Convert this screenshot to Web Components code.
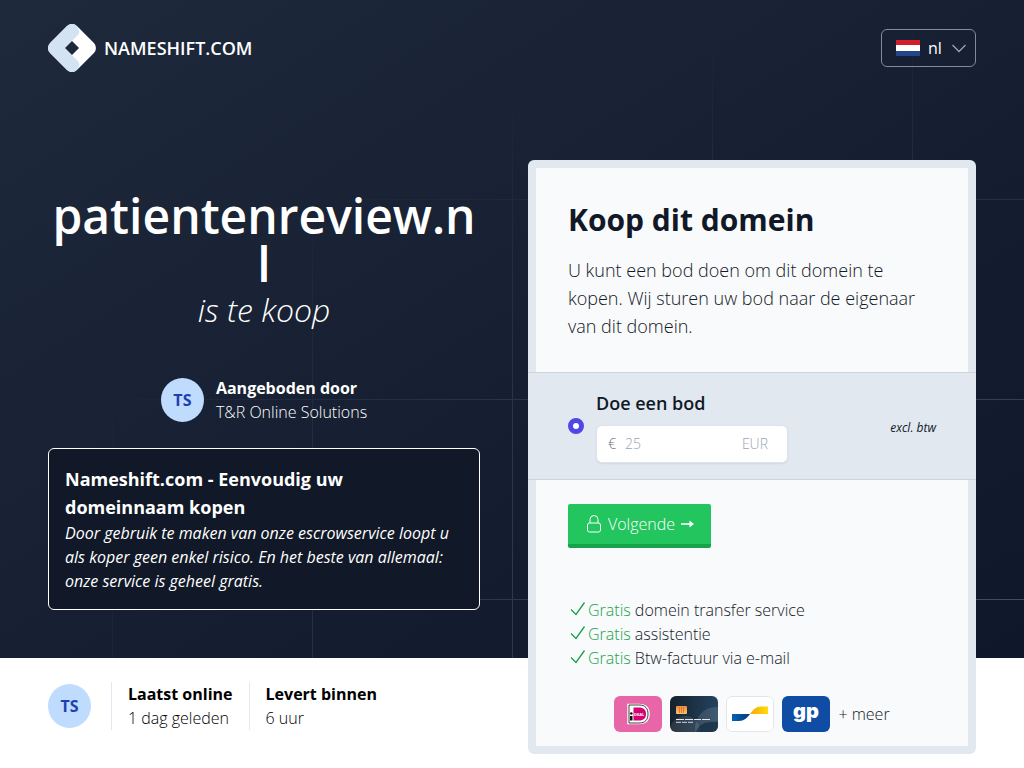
<!DOCTYPE html>
<html lang="nl">
<head>
<meta charset="utf-8">
<meta name="viewport" content="width=device-width, initial-scale=1">
<title>patientenreview.nl is te koop</title>
<style>
    body {
        margin: 0;
        background: #ffffff;
        color: #000000;
        font: 300 16px/24px "Open Sans", "Noto Sans", sans-serif;
    }
</style>
</head>
<body>
<sale-page>
    <grid-backdrop slot="backdrop"></grid-backdrop>
    <site-header slot="header">
        NAMESHIFT.COM
        <language-picker slot="actions"></language-picker>
    </site-header>
    <domain-offer slot="offer" domain="patientenreview.nl">
        is te koop
        <seller-line slot="seller" initials="TS" name="T&amp;R Online Solutions">Aangeboden door</seller-line>
        <notice-box slot="notice" heading="Nameshift.com - Eenvoudig uw domeinnaam kopen">
            Door gebruik te maken van onze escrowservice loopt u als koper geen enkel risico. En het beste van allemaal: onze service is geheel gratis.
        </notice-box>
    </domain-offer>
    <buy-card slot="card" heading="Koop dit domein">
        U kunt een bod doen om dit domein te kopen. Wij sturen uw bod naar de eigenaar van dit domein.
        <bid-option slot="option"></bid-option>
        <benefit-item slot="benefits" lead="Gratis">domein transfer service</benefit-item>
        <benefit-item slot="benefits" lead="Gratis">assistentie</benefit-item>
        <benefit-item slot="benefits" lead="Gratis">Btw-factuur via e-mail</benefit-item>
        <payment-methods slot="payments"></payment-methods>
    </buy-card>
    <seller-stats slot="stats">
        <initials-avatar slot="avatar">TS</initials-avatar>
        <stat-item label="Laatst online">1 dag geleden</stat-item>
        <stat-item label="Levert binnen">6 uur</stat-item>
    </seller-stats>
</sale-page>

<script>
class SalePage extends HTMLElement {
    constructor() {
        super();
        this.attachShadow({ mode: 'open' });
        this.shadowRoot.innerHTML = `
            <style>
                :host {
                    display: grid;
                    grid-template-columns: 48px 1fr 1fr 48px;
                    grid-template-rows: auto auto 1fr;
                    isolation: isolate;
                }
                slot[name="backdrop"]::slotted(*) { grid-column: 1 / -1; grid-row: 1 / 3; z-index: -1; }
                slot[name="header"]::slotted(*) { grid-column: 2 / 4; grid-row: 1; }
                slot[name="offer"]::slotted(*) { grid-column: 2; grid-row: 2; margin: 96px 32px 48px 0; }
                slot[name="card"]::slotted(*) { grid-column: 3; grid-row: 2 / 4; margin: 64px 0 14px 16px; }
                slot[name="stats"]::slotted(*) { grid-column: 2; grid-row: 3; margin: 24px 0; }
            </style>
            <slot name="backdrop"></slot>
            <slot name="header"></slot>
            <slot name="offer"></slot>
            <slot name="card"></slot>
            <slot name="stats"></slot>
        `;
    }
}
customElements.define('sale-page', SalePage);

class GridBackdrop extends HTMLElement {
    constructor() {
        super();
        this.attachShadow({ mode: 'open' });
        this.shadowRoot.innerHTML = `
            <style>
                :host {
                    display: grid;
                    contain: size;
                    background: linear-gradient(to bottom right, #1e293b, #0f172a);
                }
                svg {
                    width: 100%; height: 100%;
                    stroke: rgba(255, 255, 255, 0.25);
                    -webkit-mask-image: radial-gradient(100% 100% at bottom right, #fff, transparent);
                    mask-image: radial-gradient(100% 100% at bottom right, #fff, transparent);
                }
            </style>
            <svg aria-hidden="true">
                <defs>
                    <pattern id="lines" x="50%" y="-1" width="200" height="200" patternUnits="userSpaceOnUse">
                        <path d="M.5 200V.5H200" fill="none"/>
                    </pattern>
                </defs>
                <rect width="100%" height="100%" stroke="none" stroke-width="0" fill="url(#lines)"/>
            </svg>
        `;
    }
}
customElements.define('grid-backdrop', GridBackdrop);

class SiteHeader extends HTMLElement {
    constructor() {
        super();
        this.attachShadow({ mode: 'open' });
        this.shadowRoot.innerHTML = `
            <style>
                :host { display: block; color: #fff; }
                header { display: flex; align-items: center; justify-content: space-between; height: 96px; }
                a {
                    display: flex; align-items: center; gap: 8px;
                    color: inherit; text-decoration: none;
                    font-size: 18px; line-height: 28px; font-weight: 600;
                }
                svg { width: 48px; height: 48px; }
            </style>
            <header>
                <a href="#">
                    <svg viewBox="0 0 48 48" aria-hidden="true">
                        <clipPath id="tile"><rect x="5" y="5" width="38" height="38" rx="7" transform="rotate(45 24 24)"/></clipPath>
                        <g clip-path="url(#tile)">
                            <path fill="#fff" d="M0 0h48v48H0z"/>
                            <path fill="#d3e3f4" d="M0 0H28L29 3C32 7 32 9 29 12L17 24L29 36C32 39 32 42 29 45L28 48H0z"/>
                        </g>
                        <path fill="#1c283b" d="M24 17l7 7-7 7-7-7z"/>
                    </svg>
                    <slot></slot>
                </a>
                <slot name="actions"></slot>
            </header>
        `;
    }
}
customElements.define('site-header', SiteHeader);

class LanguagePicker extends HTMLElement {
    constructor() {
        super();
        this.attachShadow({ mode: 'open' });
        this.shadowRoot.innerHTML = `
            <style>
                :host { display: block; color: #fff; }
                label {
                    display: flex; align-items: center;
                    height: 36px; padding: 0 8px 0 14px;
                    border: 1px solid #858c98; border-radius: 6px;
                }
                .flag { width: 24px; height: 16px; margin-right: 8px; }
                .chevron { width: 16px; height: 16px; margin-left: 9px; fill: none; stroke: #9ca3af; stroke-width: 1.3; }
                select {
                    appearance: none; border: 0; padding: 0; margin: 0;
                    background: none; color: inherit;
                    font: 400 16px/24px "Open Sans", sans-serif;
                }
                option { color: #111827; }
            </style>
            <label>
                <svg class="flag" viewBox="0 0 24 16" aria-hidden="true">
                    <path fill="#fff" d="M0 0h24v16H0z"/>
                    <path fill="#d21f2b" d="M0 0h24v5H0z"/>
                    <path fill="#21468b" d="M0 11h24v5H0z"/>
                </svg>
                <select aria-label="Taal"><option>nl</option></select>
                <svg class="chevron" viewBox="0 0 16 16" aria-hidden="true">
                    <path d="M1.5 5L8 11.5 14.500 5"/>
                </svg>
            </label>
        `;
    }
}
customElements.define('language-picker', LanguagePicker);

class InitialsAvatar extends HTMLElement {
    constructor() {
        super();
        this.attachShadow({ mode: 'open' });
        this.shadowRoot.innerHTML = `
            <style>
                :host {
                    display: flex; align-items: center; justify-content: center;
                    flex: none; width: 43px; height: 44px; border-radius: 50%;
                    background: #bfdbfe; color: #1e40af; font-weight: 700;
                }
            </style>
            <slot></slot>
        `;
    }
}
customElements.define('initials-avatar', InitialsAvatar);

class DomainOffer extends HTMLElement {
    constructor() {
        super();
        this.attachShadow({ mode: 'open' });
        this.shadowRoot.innerHTML = `
            <style>
                :host { display: flex; flex-direction: column; gap: 24px; color: #fff; }
                hgroup { margin: 0 0 24px; text-align: center; }
                h1 { margin: 0; font-size: 48px; line-height: 48px; font-weight: 600; overflow-wrap: anywhere; }
                p { margin: 4px 0 0; font-size: 32px; line-height: 36px; font-style: italic; }
            </style>
            <hgroup>
                <h1>${this.getAttribute('domain')}</h1>
                <p><slot></slot></p>
            </hgroup>
            <slot name="seller"></slot>
            <slot name="notice"></slot>
        `;
    }
}
customElements.define('domain-offer', DomainOffer);

class SellerLine extends HTMLElement {
    constructor() {
        super();
        this.attachShadow({ mode: 'open' });
        this.shadowRoot.innerHTML = `
            <style>
                :host { display: flex; align-items: center; justify-content: center; gap: 12px; }
                strong, span { display: block; }
                strong { font-weight: 700; }
            </style>
            <initials-avatar>${this.getAttribute('initials')}</initials-avatar>
            <div>
                <strong><slot></slot></strong>
                <span class="name"></span>
            </div>
        `;
        this.shadowRoot.querySelector('.name').textContent = this.getAttribute('name');
    }
}
customElements.define('seller-line', SellerLine);

class NoticeBox extends HTMLElement {
    constructor() {
        super();
        this.attachShadow({ mode: 'open' });
        this.shadowRoot.innerHTML = `
            <style>
                :host {
                    display: block; padding: 16px;
                    border: 1px solid #fff; border-radius: 6px; background: #111827;
                }
                h2 { margin: 0; font-size: 18px; line-height: 28px; font-weight: 700; }
                p { margin: 0; font-weight: 400; font-style: italic; }
            </style>
            <h2>${this.getAttribute('heading')}</h2>
            <p><slot></slot></p>
        `;
    }
}
customElements.define('notice-box', NoticeBox);

class BuyCard extends HTMLElement {
    constructor() {
        super();
        this.attachShadow({ mode: 'open' });
        this.shadowRoot.innerHTML = `
            <style>
                :host {
                    display: block; align-self: start;
                    border: 8px solid #e2e8f0; border-radius: 6px;
                    background: #f9fafb; color: #111827;
                }
                .intro { padding: 32px; }
                h2 { margin: 0 0 16px; font-size: 30px; line-height: 40px; font-weight: 700; }
                p { margin: 0; font-size: 18px; line-height: 28px; }
                .actions { padding: 24px 32px 14px; }
                button {
                    display: flex; align-items: center; gap: 4px;
                    height: 44px; padding: 0 16px;
                    border: 0; border-bottom: 4px solid #16a34a; border-radius: 2px;
                    background: #22c55e; color: #fff;
                    font: 300 16px/24px "Open Sans", sans-serif;
                }
                button svg { fill: none; stroke: #fff; }
                .lock { width: 20px; height: 20px; }
                .arrow { width: 16px; height: 16px; }
                .benefits { margin: 50px 0 26px; }
            </style>
            <form>
                <div class="intro">
                    <h2>${this.getAttribute('heading')}</h2>
                    <p><slot></slot></p>
                </div>
                <slot name="option"></slot>
                <div class="actions">
                    <button type="button">
                        <svg class="lock" viewBox="0 0 20 20" aria-hidden="true">
                            <path d="M6 9V5.500a4 4 0 0 1 8 0V9M5.500 9h9a2 2 0 0 1 2 2v5a2 2 0 0 1-2 2h-9a2 2 0 0 1-2-2v-5a2 2 0 0 1 2-2z"/>
                        </svg>
                        Volgende
                        <svg class="arrow" viewBox="0 0 16 16" aria-hidden="true">
                            <path stroke-width="1.600" d="M2 8h10"/>
                            <path fill="#fff" stroke="none" d="M10.500 4.500L15 8l-4.500 3.500z"/>
                        </svg>
                    </button>
                    <div class="benefits" role="list"><slot name="benefits"></slot></div>
                    <slot name="payments"></slot>
                </div>
            </form>
        `;
    }
}
customElements.define('buy-card', BuyCard);

class BidOption extends HTMLElement {
    constructor() {
        super();
        this.attachShadow({ mode: 'open' });
        this.shadowRoot.innerHTML = `
            <style>
                /* runs over the side borders of the card */
                :host {
                    display: flex; align-items: center;
                    margin: 0 -8px; padding: 16px 40px;
                    border: solid #cbd5e1; border-width: 1px 0;
                    background: #e2e8f0;
                }
                input[type="radio"] {
                    appearance: none; flex: none;
                    width: 16px; height: 16px; margin: 0 12px 0 0;
                    border: 5px solid #4f46e5; border-radius: 50%; background: #fff;
                }
                .field { flex: 1; }
                .title { display: block; margin-bottom: 8px; font-size: 18px; line-height: 28px; font-weight: 600; }
                .amount {
                    display: flex; align-items: center; box-sizing: border-box;
                    width: 192px; height: 38px; padding: 0 19px 0 11px;
                    border: 1px solid #dfe4ea; border-radius: 6px;
                    background: #fff; box-shadow: 0 1px 2px rgba(0, 0, 0, 0.08);
                    font-size: 14px; line-height: 20px; color: #6b7280;
                }
                .amount input {
                    flex: 1; min-width: 0; padding: 0; margin: 0 9px;
                    border: 0; outline: 0; background: none;
                    font: inherit; color: #111827;
                }
                .amount input::placeholder { color: #9ca3af; opacity: 1; }
                .currency { color: #9ca3af; }
                small { padding-top: 4px; font-size: 12px; line-height: 16px; font-weight: 400; font-style: italic; }
            </style>
            <input type="radio" name="option" checked aria-labelledby="title">
            <div class="field">
                <label class="title" id="title" for="bid">Doe een bod</label>
                <div class="amount">
                    <span>€</span>
                    <input id="bid" type="text" inputmode="numeric" placeholder="25">
                    <span class="currency">EUR</span>
                </div>
            </div>
            <small>excl. btw</small>
        `;
    }
}
customElements.define('bid-option', BidOption);

class BenefitItem extends HTMLElement {
    constructor() {
        super();
        this.attachShadow({ mode: 'open' });
        this.shadowRoot.innerHTML = `
            <style>
                :host { display: flex; align-items: center; }
                svg { width: 20px; height: 20px; fill: none; stroke: #16a34a; stroke-width: 1.3; }
                .lead { color: #16a34a; }
            </style>
            <svg viewBox="0 0 20 20" aria-hidden="true"><path d="M3 9.500l5 5L16.500 2.500"/></svg>
            <div><span class="lead">${this.getAttribute('lead')}</span> <slot></slot></div>
        `;
    }

    connectedCallback() {
        this.setAttribute('role', 'listitem');
    }
}
customElements.define('benefit-item', BenefitItem);

class PaymentMethods extends HTMLElement {
    constructor() {
        super();
        this.attachShadow({ mode: 'open' });
        this.shadowRoot.innerHTML = `
            <style>
                :host { display: flex; align-items: center; justify-content: center; gap: 8px; }
                svg { width: 48px; height: 36px; border-radius: 6px; }
            </style>
            <svg viewBox="0 0 48 36" role="img" aria-label="iDEAL">
                <path fill="#e865a8" d="M0 0h48v36H0z"/>
                <path fill="#fff" stroke="#fff" stroke-width="2.500" d="M14.500 9H25c6.500 0 9.500 3.500 9.500 9s-3 9-9.500 9H14.500z"/>
                <path fill="#fff" stroke="#111" stroke-width=".8" d="M15 9H25c6.500 0 9 3.500 9 9s-2.500 9-9 9H15z"/>
                <path fill="#d50072" d="M19.500 11.500H25c4.500 0 7 2.200 7 6.500s-2.500 6.500-7 6.500h-5.500z"/>
                <circle cx="17.300" cy="17.500" r="1.300" fill="#111"/>
                <path fill="#111" d="M16 20h2.500v4.500H16z"/>
                <text x="20" y="20" fill="#fff" font-family="Open Sans, sans-serif" font-size="4" font-weight="700">DEAL</text>
            </svg>
            <svg viewBox="0 0 48 36" role="img" aria-label="Creditcard">
                <defs>
                    <linearGradient id="dark" x1="0" y1="0" x2="1" y2="0">
                        <stop offset="0" stop-color="#15212d"/><stop offset="1" stop-color="#24435f"/>
                    </linearGradient>
                    <linearGradient id="chip" x1="0" y1="0" x2="0" y2="1">
                        <stop offset="0" stop-color="#f08a3c"/><stop offset="1" stop-color="#fbc665"/>
                    </linearGradient>
                </defs>
                <path fill="url(#dark)" d="M0 0h48v36H0z"/>
                <circle cx="15" cy="35" r="15" fill="#fff" opacity="0.100"/>
                <circle cx="46" cy="32" r="21" fill="#fff" opacity="0.120"/>
                <path fill="#0e2336" opacity="0.600" d="M26 36c2-7 9-11 22-10v10z"/>
                <rect x="6" y="10" width="11" height="8" rx="1" fill="url(#chip)"/>
                <path stroke="#c8682c" stroke-width=".7" d="M9.500 11v6M11.500 11v6M13.500 11v6"/>
                <path stroke="#e4e9ee" d="M6 23.500h8m1 0h8m1 0h7m1 0h8"/>
                <path stroke="#aeb8c2" stroke-width="1.200" d="M6 26.400h5m1 0h5m1 0h5"/>
            </svg>
            <svg viewBox="0 0 48 36" role="img" aria-label="Bancontact">
                <defs>
                    <linearGradient id="blue"><stop offset="0" stop-color="#0064b5"/><stop offset="1" stop-color="#083b7c"/></linearGradient>
                    <linearGradient id="yellow"><stop offset="0" stop-color="#f5a900"/><stop offset="1" stop-color="#ffdc0a"/></linearGradient>
                </defs>
                <rect x=".5" y=".5" width="47" height="35" rx="5.500" fill="#fff" stroke="#e5e5e5"/>
                <path fill="url(#blue)" d="M6 18h18c-3 4-6 7-11 7H6z"/>
                <path fill="url(#yellow)" d="M42 18H24c3-4 6-7.500 11-7.500h7z"/>
            </svg>
            <svg viewBox="0 0 48 36" role="img" aria-label="Giropay">
                <path fill="#0f4ca3" d="M0 0h48v36H0z"/>
                <text x="24" y="22" fill="#fff" text-anchor="middle" font-family="Inter, sans-serif" font-size="20" font-weight="900">gp</text>
            </svg>
            <span>+ meer</span>
        `;
    }
}
customElements.define('payment-methods', PaymentMethods);

class SellerStats extends HTMLElement {
    constructor() {
        super();
        this.attachShadow({ mode: 'open' });
        this.shadowRoot.innerHTML = `
            <style>
                :host { display: flex; align-items: center; align-self: start; }
                slot[name="avatar"]::slotted(*) { margin-right: 20px; }
            </style>
            <slot name="avatar"></slot>
            <slot></slot>
        `;
    }
}
customElements.define('seller-stats', SellerStats);

class StatItem extends HTMLElement {
    constructor() {
        super();
        this.attachShadow({ mode: 'open' });
        this.shadowRoot.innerHTML = `
            <style>
                :host { display: block; padding: 0 16px; border-left: 1px solid #e2e8f0; }
                strong { display: block; font-weight: 700; }
            </style>
            <strong>${this.getAttribute('label')}</strong>
            <slot></slot>
        `;
    }
}
customElements.define('stat-item', StatItem);
</script>
</body>
</html>
